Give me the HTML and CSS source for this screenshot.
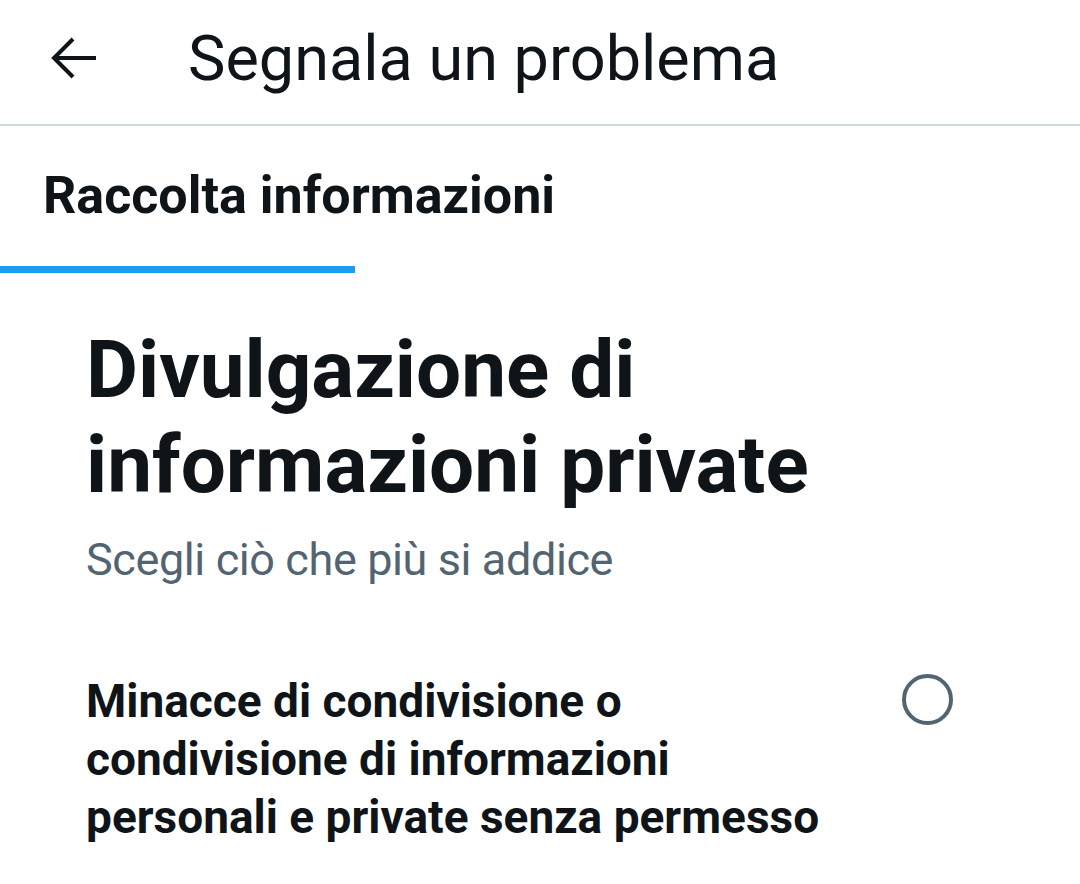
FILE: index.html
```html
<!DOCTYPE html>
<html lang="it">
<head>
<meta charset="utf-8">
<link rel="stylesheet" href="styles.css">
</head>
<body>
<header class="topbar">
  <button class="back" aria-label="Indietro">
    <svg viewBox="0 0 48 48" width="48" height="48"><path d="M46 22H4M23 3L4 22l19 19" fill="none" stroke="#0f1419" stroke-width="4"/></svg>
  </button>
  <h1 class="title">Segnala un problema</h1>
</header>
<nav class="tabs">
  <div class="tab">
    <span class="tab-label">Raccolta informazioni</span>
    <span class="tab-bar"></span>
  </div>
</nav>
<main class="content">
  <h2 class="heading">Divulgazione di informazioni private</h2>
  <p class="sub">Scegli ciò che più si addice</p>
  <div class="option">
    <span class="option-text">Minacce di condivisione o condivisione di informazioni personali e private senza permesso</span>
    <span class="radio"></span>
  </div>
</main>
</body>
</html>
```
FILE: styles.css
```css
html, body {
  margin: 0;
  padding: 0;
  background: #ffffff;
  color: #0f1419;
  font-family: Roboto, "Liberation Sans", sans-serif;
}
.topbar {
  height: 126px;
  display: flex;
  align-items: center;
  border-bottom: 2px solid #cfd9de;
  box-sizing: border-box;
}
.back {
  border: 0;
  background: none;
  padding: 0;
  margin-left: 50px;
  margin-top: -4px;
  width: 48px;
  height: 48px;
  display: flex;
  align-items: center;
  justify-content: center;
}
.title {
  margin: -8px 0 0 90px;
  font-size: 63px;
  font-weight: 400;
  letter-spacing: 0;
  line-height: 1;
}
.tabs {
  display: flex;
}
.tab {
  width: 355px;
  display: flex;
  flex-direction: column;
}
.tab-label {
  margin-left: 43px;
  margin-top: 40px;
  font-size: 52px;
  font-weight: 700;
  line-height: 60px;
  white-space: nowrap;
}
.tab-bar {
  margin-top: 40px;
  height: 7px;
  background: #1d9bf0;
}
.content {
  padding: 0 0 0 86px;
}
.heading {
  margin: 50px 0 0 0;
  width: 760px;
  font-size: 80px;
  font-weight: 700;
  line-height: 95px;
}
.sub {
  margin: 17px 0 0 0;
  font-size: 45px;
  letter-spacing: -0.4px;
  line-height: 60px;
  color: #536471;
}
.option {
  margin-top: 82px;
  display: flex;
  align-items: flex-start;
  justify-content: space-between;
  padding-right: 127px;
}
.option-text {
  width: 750px;
  font-size: 46px;
  font-weight: 700;
  line-height: 58px;
}
.radio {
  width: 43px;
  height: 43px;
  border: 4px solid #536471;
  border-radius: 50%;
  margin-top: 2px;
  flex-shrink: 0;
}
```
